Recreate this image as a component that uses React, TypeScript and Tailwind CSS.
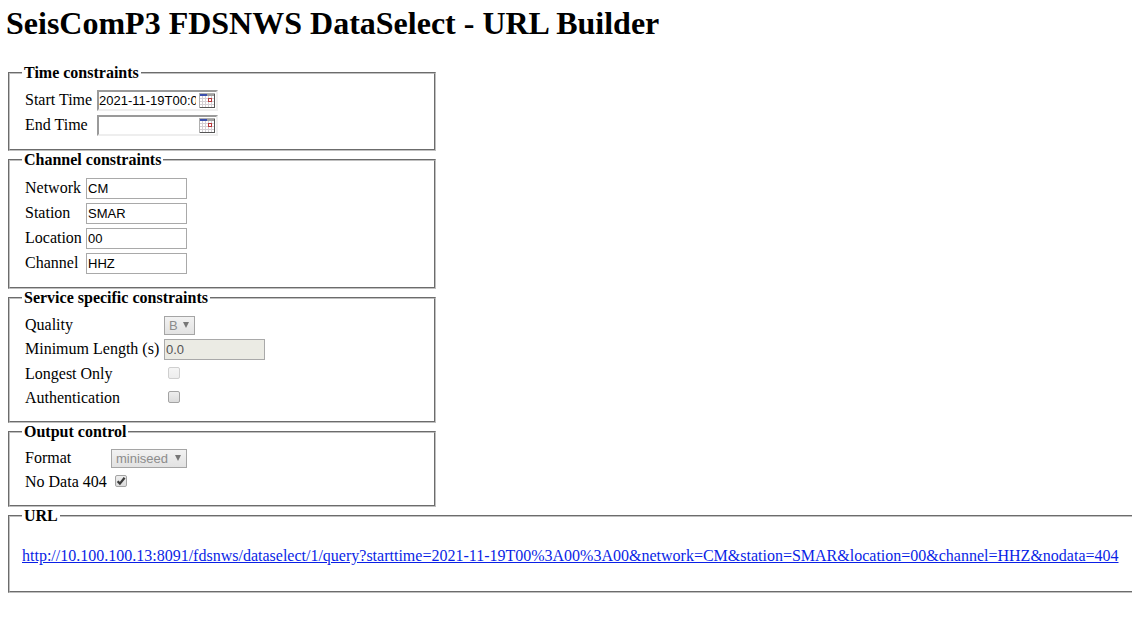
import { createContext, useContext, useState } from "react";
import type { ReactNode } from "react";

const INPUT_FONT = "font-['Liberation_Sans',Arial,sans-serif] text-[13px] leading-4";

const LabelWidth = createContext("");

function Group({ title, className, children }: { title: string; className: string; children: ReactNode }) {
  return (
    <fieldset className={`[border-style:groove] border-[#c0c0c0] px-3 pb-2.5 ${className}`}>
      <legend className="px-0.5 font-bold">{title}</legend>
      {children}
    </fieldset>
  );
}

function FormTable({ labelWidth, children }: { labelWidth: string; children: ReactNode }) {
  return (
    <LabelWidth.Provider value={labelWidth}>
      <table className="border-separate border-spacing-[2px]">
        <tbody>{children}</tbody>
      </table>
    </LabelWidth.Provider>
  );
}

function Row({ id, label, children }: { id: string; label: string; children: ReactNode }) {
  const labelWidth = useContext(LabelWidth);
  return (
    <tr>
      <td className={`p-px pb-0.5 align-middle whitespace-nowrap ${labelWidth}`}>
        <label htmlFor={id}>{label}</label>
      </td>
      <td className="p-px align-middle">{children}</td>
    </tr>
  );
}

function CalendarIcon() {
  return (
    <svg width="16" height="15" viewBox="0 0 16 15" shapeRendering="crispEdges" aria-hidden="true">
      <path d="M0 0h16v15H0z" fill="#fff" />
      <path d="M0 0h16v1H0zM0 0h1v15H0z" fill="#b0b0b0" />
      <path d="M8 1h7v2H8z" fill="#a0a0a0" />
      <path d="M1 1h7v2H1z" fill="#3b4fae" />
      <path d="M3 3h1v11H3zM6 3h1v11H6zM9 3h1v11H9zM12 3h1v11h-1zM1 5h14v1H1zM1 8h14v1H1zM1 11h14v1H1z" fill="#d4cfd4" />
      <path d="M9 5h4v4H9z" fill="#b8383c" />
      <path d="M10 6h2v2h-2z" fill="#fff" />
      <path d="M15 1h1v14h-1zM1 14h15v1H1z" fill="#555" />
    </svg>
  );
}

function TimeRow({ id, label, initial }: { id: string; label: string; initial: string }) {
  const [value, setValue] = useState(initial);
  return (
    <Row id={id} label={label}>
      <div className="relative w-[121px]">
        <input
          id={id}
          value={value}
          onChange={(e) => setValue(e.target.value)}
          className={`block h-[21px] w-full border-2 border-t-[#9a9a9a] border-l-[#9a9a9a] border-r-[#eee] border-b-[#eee] bg-white pr-5 ${INPUT_FONT}`}
        />
        <button type="button" aria-label={`Pick ${label}`} className="absolute top-[3px] right-[3px] block">
          <CalendarIcon />
        </button>
      </div>
    </Row>
  );
}

function TextRow({ id, label, initial, disabled = false }: { id: string; label: string; initial: string; disabled?: boolean }) {
  const [value, setValue] = useState(initial);
  return (
    <Row id={id} label={label}>
      <input
        id={id}
        value={value}
        disabled={disabled}
        onChange={(e) => setValue(e.target.value)}
        className={`block h-[21px] w-[101px] border border-[#a9a9a9] bg-white px-px text-black disabled:bg-[#ebebe4] disabled:text-[#545454] ${INPUT_FONT}`}
      />
    </Row>
  );
}

function SelectRow({ id, label, option, width }: { id: string; label: string; option: string; width: string }) {
  return (
    <Row id={id} label={label}>
      <div className={`relative h-[19px] ${width}`}>
        <select
          id={id}
          disabled
          className={`block h-full w-full appearance-none border border-[#a5a5a5] bg-linear-to-b from-[#f2f2f2] to-[#e2e2e2] pl-1 text-[#8c8c8c] ${INPUT_FONT}`}
        >
          <option>{option}</option>
        </select>
        <svg width="6" height="6" viewBox="0 0 6 6" className="pointer-events-none absolute top-1.5 right-1.5" aria-hidden="true">
          <path d="M0 0h6L3 6z" fill="#777" />
        </svg>
      </div>
    </Row>
  );
}

function CheckRow({ id, label, initial = false, disabled = false }: { id: string; label: string; initial?: boolean; disabled?: boolean }) {
  const [checked, setChecked] = useState(initial);
  return (
    <Row id={id} label={label}>
      <div className="flex h-5 items-center pb-0.5 pl-1">
        <div className="relative size-3">
          <input
            id={id}
            type="checkbox"
            checked={checked}
            disabled={disabled}
            onChange={(e) => setChecked(e.target.checked)}
            className="block size-3 appearance-none rounded-xs border border-[#a3a3a3] bg-linear-to-b from-[#eee] to-[#dcdcdc] disabled:border-[#cfcfcf] disabled:from-[#f5f5f5] disabled:to-[#ededed]"
          />
          {checked && (
            <svg width="12" height="12" viewBox="0 0 12 12" className="pointer-events-none absolute inset-0" aria-hidden="true">
              <path d="M2.6 6.2 4.9 8.6 9.6 2.8" fill="none" stroke="#3c3c3c" strokeWidth="2.3" />
            </svg>
          )}
        </div>
      </div>
    </Row>
  );
}

const QUERY_URL =
  "http://10.100.100.13:8091/fdsnws/dataselect/1/query?starttime=2021-11-19T00%3A00%3A00&network=CM&station=SMAR&location=00&channel=HHZ&nodata=404";

export default function App() {
  return (
    <main className="bg-white pb-7 font-['Liberation_Serif','Times_New_Roman',serif] text-[16px] leading-[18px] text-black">
      <h1 className="px-1.5 pt-[5px] pb-[22px] text-[32px] leading-[37px] font-bold">
        SeisComP3 FDSNWS DataSelect - URL Builder
      </h1>
      <form className="pl-2">
        <Group title="Time constraints" className="max-w-[428px] border-2 pt-[5px]">
          <FormTable labelWidth="w-[70px]">
            <TimeRow id="start" label="Start Time" initial="2021-11-19T00:00:00" />
            <TimeRow id="end" label="End Time" initial="" />
          </FormTable>
        </Group>
        <Group title="Channel constraints" className="max-w-[428px] border-2 pt-1.5">
          <FormTable labelWidth="w-[59px]">
            <TextRow id="network" label="Network" initial="CM" />
            <TextRow id="station" label="Station" initial="SMAR" />
            <TextRow id="location" label="Location" initial="00" />
            <TextRow id="channel" label="Channel" initial="HHZ" />
          </FormTable>
        </Group>
        <Group title="Service specific constraints" className="max-w-[428px] border-2 pt-1.5">
          <FormTable labelWidth="w-[137px]">
            <SelectRow id="quality" label="Quality" option="B" width="w-[31px]" />
            <TextRow id="minlength" label="Minimum Length (s)" initial="0.0" disabled />
            <CheckRow id="longest" label="Longest Only" disabled />
            <CheckRow id="auth" label="Authentication" />
          </FormTable>
        </Group>
        <Group title="Output control" className="max-w-[428px] border-2 pt-[5px]">
          <FormTable labelWidth="w-[84px]">
            <SelectRow id="format" label="Format" option="miniseed" width="w-[76px]" />
            <CheckRow id="nodata" label="No Data 404" initial />
          </FormTable>
        </Group>
        <Group title="URL" className="border-2 border-r-0 pt-1.5">
          <p className="my-4">
            <a href={QUERY_URL} className="whitespace-nowrap text-[#0a1fe6] underline">
              {QUERY_URL}
            </a>
          </p>
        </Group>
      </form>
    </main>
  );
}
